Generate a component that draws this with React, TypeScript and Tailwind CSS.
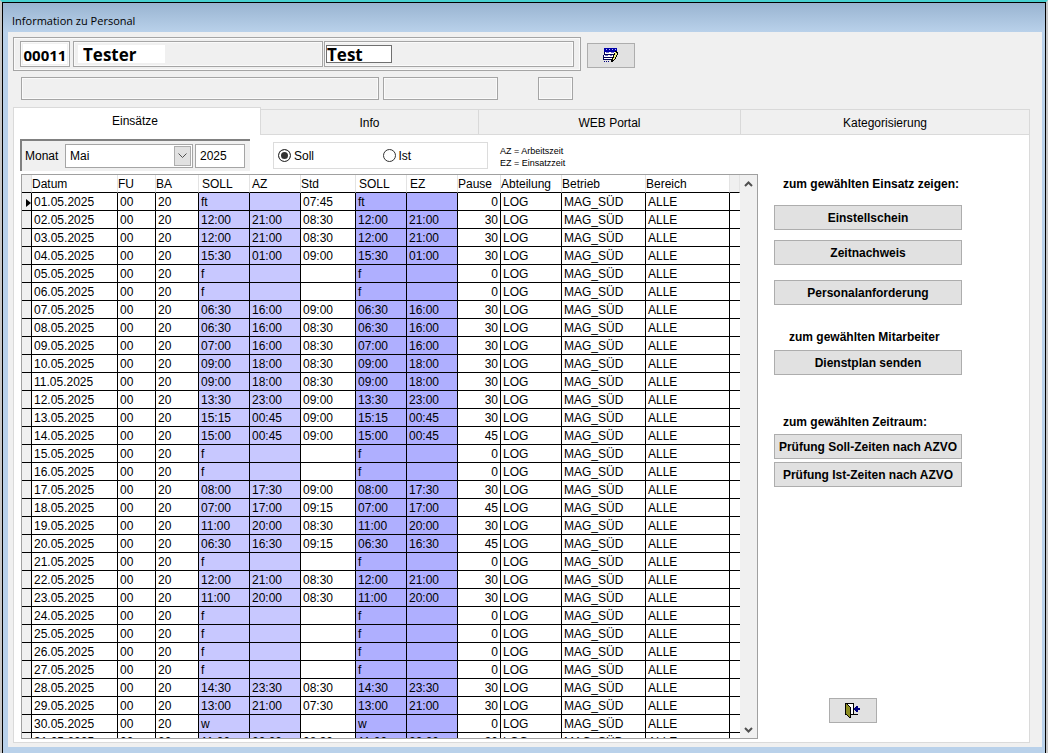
import { useState } from "react";

interface Shift {
  day: string;
  soll: string;
  az: string;
  std: string;
  pause: number;
}

const shift = (day: string, soll: string, az = "", std = "", pause = 0): Shift => ({ day, soll, az, std, pause });

const shifts: Shift[] = [
  shift("01", "ft", "", "07:45"),
  shift("02", "12:00", "21:00", "08:30", 30),
  shift("03", "12:00", "21:00", "08:30", 30),
  shift("04", "15:30", "01:00", "09:00", 30),
  shift("05", "f"),
  shift("06", "f"),
  shift("07", "06:30", "16:00", "09:00", 30),
  shift("08", "06:30", "16:00", "08:30", 30),
  shift("09", "07:00", "16:00", "08:30", 30),
  shift("10", "09:00", "18:00", "08:30", 30),
  shift("11", "09:00", "18:00", "08:30", 30),
  shift("12", "13:30", "23:00", "09:00", 30),
  shift("13", "15:15", "00:45", "09:00", 30),
  shift("14", "15:00", "00:45", "09:00", 45),
  shift("15", "f"),
  shift("16", "f"),
  shift("17", "08:00", "17:30", "09:00", 30),
  shift("18", "07:00", "17:00", "09:15", 45),
  shift("19", "11:00", "20:00", "08:30", 30),
  shift("20", "06:30", "16:30", "09:15", 45),
  shift("21", "f"),
  shift("22", "12:00", "21:00", "08:30", 30),
  shift("23", "11:00", "20:00", "08:30", 30),
  shift("24", "f"),
  shift("25", "f"),
  shift("26", "f"),
  shift("27", "f"),
  shift("28", "14:30", "23:30", "08:30", 30),
  shift("29", "13:00", "21:00", "07:30", 30),
  shift("30", "w"),
  shift("31", "11:00", "20:00", "08:30", 30),
];

const columns = [
  { label: "", width: "w-[10px]", head: "bg-[#f0f0f0]" },
  { label: "Datum", width: "w-[86px]", head: "" },
  { label: "FU", width: "w-[38px]", head: "" },
  { label: "BA", width: "w-[43px]", head: "" },
  { label: "SOLL", width: "w-[51px]", head: "pl-[3px]" },
  { label: "AZ", width: "w-[51px]", head: "pl-[2px]" },
  { label: "Std", width: "w-[55px]", head: "" },
  { label: "SOLL", width: "w-[51px]", head: "pl-[3px]" },
  { label: "EZ", width: "w-[51px]", head: "pl-[3px]" },
  { label: "Pause", width: "w-[43px]", head: "" },
  { label: "Abteilung", width: "w-[61px]", head: "" },
  { label: "Betrieb", width: "w-[84px]", head: "" },
  { label: "Bereich", width: "w-[84px]", head: "" },
  { label: "", width: "w-[10px]", head: "bg-[#f0f0f0]" },
];

const tabs = [
  { label: "Info", grow: "grow-[217]" },
  { label: "WEB Portal", grow: "grow-[261]" },
  { label: "Kategorisierung", grow: "grow-[288]" },
];

const cell = "h-[18px] overflow-hidden whitespace-nowrap border-r border-b border-black p-0 pl-[2px]";
const frame = "border border-[#a5a5a5] shadow-[inset_0_0_0_1px_#fafafa]";
const pushButton = "border border-[#adadad] bg-[#e1e1e1]";

function EditIcon() {
  return (
    <svg width="16" height="15" viewBox="0 0 16 15" shapeRendering="crispEdges" aria-hidden="true">
      <path d="M1 0h13v4H1z" fill="#0000a8" />
      <path d="M3 1h1v1H3zM6 1h1v1H6zM9 1h1v1H9zM12 1h1v1h-1z" fill="#b8b8ff" />
      <path d="M2 4h11v2H2zM1 7h10v2H1zM1 10h9v1H1z" fill="#fff" />
      <path d="M1 4h1v2H1zM1 6h11v1H1zM0 9h11v1H0zM0 10h1v1H0zM0 11h10v1H0zM0 7h1v2H0z" fill="#000050" />
      <path d="M3 4h3v1H3zM8 4h3v1H8zM2 7h3v1H2zM7 7h2v1H7z" fill="#7070c8" />
      <path d="M1 13h1v1H1zM3 13h1v1H3zM5 13h1v1H5z" fill="#000080" />
      <path d="M12 3h2v1h1v3h-1v2h-1v2h-1v1h-1v1h-1v1H8v-3h1V9h1V7h1V5h1z" fill="#000" />
      <path d="M12 4h1v1h1v2h-1v2h-1v2h-1v1h-1v-2h1V7h1z" fill="#f0f080" />
    </svg>
  );
}

function ExitIcon() {
  return (
    <svg width="16" height="15" viewBox="0 0 16 15" shapeRendering="crispEdges" aria-hidden="true">
      <path d="M0 0h9v11h4v1H0z" fill="#000" />
      <path d="M2 1h6v10H2z" fill="#fff" />
      <path d="M0 0h2v1h1v1h1v1h1v1h1v11H4v-1H3v-1H2v-1H0z" fill="#000" />
      <path d="M1 1h1v1h1v1h1v1h1v10H4v-1H3v-1H2v-1H1z" fill="#8c8c20" />
      <path d="M9 5h1V4h1V3h2v2h2v2h-2v2h-2V8h-1V7H9z" fill="#000080" />
    </svg>
  );
}

function Chevron({ d }: { d: string }) {
  return (
    <svg width="9" height="6" viewBox="0 0 9 6" fill="none" stroke="#505050" strokeWidth="2" aria-hidden="true">
      <path d={d} />
    </svg>
  );
}

function Header() {
  return (
    <header className="pt-[5px] pl-[5px]">
      <div className="flex items-start gap-[6px]">
        <div className={`flex h-[34px] w-[568px] items-center pl-[6px] ${frame}`}>
          <div className={`h-[26px] w-[50px] p-[2px] ${frame}`}>
            <input
              aria-label="Personalnummer"
              defaultValue="00011"
              className="block h-5 w-full bg-white pt-px text-center font-['Open_Sans',sans-serif] text-[15px] leading-5 font-bold"
            />
          </div>
          <div className={`ml-[3px] h-[26px] w-[250px] p-[3px] pl-[4px] ${frame}`}>
            <input
              aria-label="Nachname"
              defaultValue="Tester"
              className="block h-[18px] w-[87px] bg-white pt-px pl-[5px] font-['Open_Sans',sans-serif] text-[17px] leading-4 font-bold"
            />
          </div>
          <div className={`ml-px h-[26px] w-[250px] py-[3px] pl-px ${frame}`}>
            <input
              aria-label="Vorname"
              defaultValue="Test"
              className="block h-[18px] w-[66px] border border-[#707070] bg-white font-['Open_Sans',sans-serif] text-[17px] leading-4 font-bold"
            />
          </div>
        </div>
        <button type="button" aria-label="Bearbeiten" className={`mt-[6px] flex h-[25px] w-12 items-center justify-center ${pushButton}`}>
          <EditIcon />
        </button>
      </div>
      <div className="mt-[6px] ml-2 flex">
        <div className={`h-[23px] w-[358px] ${frame}`} />
        <div className={`ml-1 h-[23px] w-[115px] ${frame}`} />
        <div className={`ml-10 h-[23px] w-[35px] ${frame}`} />
      </div>
    </header>
  );
}

function TabBar() {
  return (
    <div role="tablist" className="flex items-end">
      <button
        type="button"
        role="tab"
        aria-selected="true"
        className="relative z-10 -mb-px h-7 shrink basis-0 grow-[242] border border-b-0 border-[#dadada] bg-white pr-1 pb-[2px]"
      >
        Einsätze
      </button>
      {tabs.map((t) => (
        <button
          key={t.label}
          type="button"
          role="tab"
          aria-selected="false"
          className={`h-[25px] shrink basis-0 border-t border-r border-[#d9d9d9] bg-[#f0f0f0] pt-px ${t.grow}`}
        >
          {t.label}
        </button>
      ))}
    </div>
  );
}

function Filters() {
  const [mode, setMode] = useState("Soll");

  return (
    <div className="flex">
      <div className="flex h-8 w-[230px] items-center border-t-2 border-l-2 border-[#808080] bg-[#f0f0f0]">
        <label htmlFor="month" className="w-[43px] pl-[3px]">
          Monat
        </label>
        <div className="relative h-6 w-[128px]">
          <select id="month" defaultValue="Mai" className="block h-6 w-full appearance-none border border-[#a5a5a5] bg-white pl-1">
            <option>Mai</option>
          </select>
          <span className="pointer-events-none absolute top-[2px] right-[2px] flex h-5 w-[17px] items-center justify-center border border-[#adadad] bg-[#e1e1e1]">
            <svg width="9" height="6" viewBox="0 0 9 6" fill="none" stroke="#505050" aria-hidden="true">
              <path d="M.5 .5l4 4 4-4" />
            </svg>
          </span>
        </div>
        <input aria-label="Jahr" defaultValue="2025" className="ml-[2px] h-6 w-[50px] border border-[#a5a5a5] bg-white pl-1" />
      </div>
      <div className="mt-[3px] ml-[23px] flex h-[27px] w-[215px] items-center border border-[#dcdcdc] pl-1">
        {["Soll", "Ist"].map((m) => (
          <label key={m} className="flex w-[105px] items-center gap-[3px]">
            <input
              type="radio"
              name="mode"
              checked={mode === m}
              onChange={() => setMode(m)}
              className="size-[13px] appearance-none rounded-full border border-[#333] bg-white checked:bg-[#333] checked:shadow-[inset_0_0_0_2px_white]"
            />
            {m}
          </label>
        ))}
      </div>
      <p className="mt-[6px] ml-3 text-[9px] leading-3">
        AZ = Arbeitszeit
        <br />
        EZ = Einsatzzeit
      </p>
    </div>
  );
}

function ShiftTable() {
  return (
    <div className="mt-[3px] mb-[3px] ml-px flex min-h-0 flex-1 self-start overflow-hidden border border-[#a0a0a0]">
      <div className="min-h-0 overflow-hidden">
        <table className="w-[718px] table-fixed border-separate border-spacing-0">
          <thead>
            <tr>
              {columns.map((c, i) => (
                <th
                  key={i}
                  className={`h-[18px] overflow-hidden border-r border-b border-r-[#e3e3e3] border-b-black p-0 text-left font-normal whitespace-nowrap ${c.width} ${c.head}`}
                >
                  {c.label}
                </th>
              ))}
            </tr>
          </thead>
          <tbody>
            {shifts.map((s, i) => (
              <tr key={s.day}>
                <td className="h-[18px] border-r border-b border-black bg-[#f0f0f0] p-0">
                  {i === 0 && (
                    <svg width="5" height="8" viewBox="0 0 5 8" className="mt-[3px] ml-1" aria-hidden="true">
                      <path d="M0 0l5 4-5 4z" />
                    </svg>
                  )}
                </td>
                <td className={cell}>{s.day}.05.2025</td>
                <td className={cell}>00</td>
                <td className={cell}>20</td>
                <td className={`${cell} bg-[#c8c8ff]`}>{s.soll}</td>
                <td className={`${cell} bg-[#c8c8ff]`}>{s.az}</td>
                <td className={cell}>{s.std}</td>
                <td className={`${cell} bg-[#afafff]`}>{s.soll}</td>
                <td className={`${cell} bg-[#afafff]`}>{s.az}</td>
                <td className={`${cell} pr-[2px] text-right`}>{s.pause}</td>
                <td className={cell}>LOG</td>
                <td className={cell}>MAG_SÜD</td>
                <td className={cell}>ALLE</td>
                <td className="h-[18px] border-b border-black p-0" />
              </tr>
            ))}
          </tbody>
        </table>
      </div>
      <div className="flex w-[17px] flex-col items-center justify-between bg-[#f0f0f0] pt-[6px] pb-[5px]">
        <Chevron d="M1 5l3.500-3.500 3.500 3.500" />
        <Chevron d="M1 1l3.500 3.500 3.500-3.500" />
      </div>
    </div>
  );
}

function ActionButton({ children }: { children: string }) {
  return (
    <button type="button" className={`h-[25px] w-full font-bold whitespace-nowrap ${pushButton}`}>
      {children}
    </button>
  );
}

function Actions() {
  return (
    <aside className="ml-4 flex w-[188px] flex-col pt-[37px] font-bold">
      <h2 className="pl-[9px] leading-4">zum gewählten Einsatz zeigen:</h2>
      <div className="mt-[13px] flex flex-col gap-[10px]">
        <ActionButton>Einstellschein</ActionButton>
        <ActionButton>Zeitnachweis</ActionButton>
      </div>
      <div className="mt-[15px]">
        <ActionButton>Personalanforderung</ActionButton>
      </div>
      <h2 className="mt-6 pl-[15px] leading-4">zum gewählten Mitarbeiter</h2>
      <div className="mt-[5px]">
        <ActionButton>Dienstplan senden</ActionButton>
      </div>
      <h2 className="mt-[39px] pl-[9px] leading-4">zum gewählten Zeitraum:</h2>
      <div className="mt-1 flex flex-col gap-[3px]">
        <ActionButton>Prüfung Soll-Zeiten nach AZVO</ActionButton>
        <ActionButton>Prüfung Ist-Zeiten nach AZVO</ActionButton>
      </div>
      <button
        type="button"
        aria-label="Schließen"
        className={`mt-auto mb-[19px] ml-[55px] flex h-[25px] w-12 items-center justify-center ${pushButton}`}
      >
        <ExitIcon />
      </button>
    </aside>
  );
}

export default function App() {
  return (
    <div className="flex h-screen flex-col border-x-2 border-t-2 border-x-[#c8c8c8] border-t-[#48d0d0] bg-[#b9d1ea] font-['Liberation_Sans',Arial,sans-serif] text-xs text-black">
      <div className="flex min-h-0 flex-1 flex-col border-x border-t border-black pb-[6px]">
        <div className="h-[29px] shrink-0 bg-linear-to-b from-[#99b4d1] to-[#b9d1ea] pt-[10px] pl-[9px] font-['Open_Sans',sans-serif] text-[11px] leading-4">
          Information zu Personal
        </div>
        <main className="mr-[3px] ml-[5px] flex min-h-0 flex-1 flex-col bg-[#f0f0f0]">
          <Header />
          <div className="mt-[7px] mr-3 mb-1 ml-[5px] flex min-h-0 flex-1 flex-col">
            <TabBar />
            <div className="flex min-h-0 flex-1 border border-[#dadada] bg-white pt-1 pl-[6px]">
              <div className="flex min-h-0 flex-col">
                <Filters />
                <ShiftTable />
              </div>
              <Actions />
            </div>
          </div>
        </main>
      </div>
    </div>
  );
}
